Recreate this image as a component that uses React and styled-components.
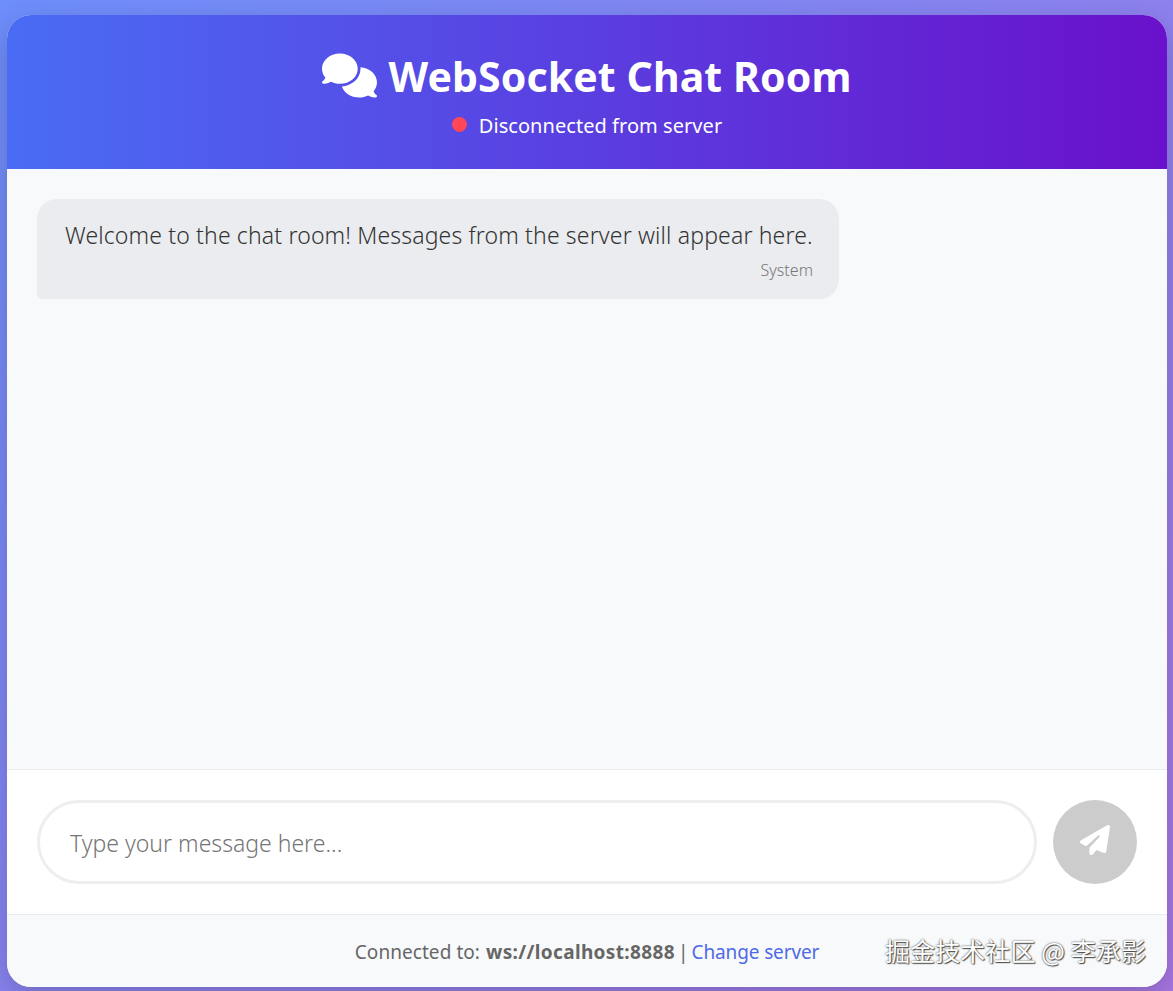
import React from "react";
import styled, { createGlobalStyle } from "styled-components";
import { FaComments, FaPaperPlane } from "react-icons/fa6";

const GlobalStyle = createGlobalStyle`
  html, body {
    margin: 0;
    padding: 0;
  }
  body {
    height: 991px;
    overflow: hidden;
    background: linear-gradient(135deg, #6e8efb, #a777e3);
    font-family: "Noto Sans", "Open Sans", sans-serif;
  }
`;

const Page = styled.div`
  height: 991px;
  box-sizing: border-box;
  padding: 15px 6px 4px 7px;
`;

const Card = styled.div`
  position: relative;
  height: 100%;
  display: flex;
  flex-direction: column;
  background: white;
  border-radius: 24px;
  overflow: hidden;
  box-shadow: 0 10px 30px rgba(0, 0, 0, 0.2);
`;

const Header = styled.header`
  height: 154px;
  flex-shrink: 0;
  display: flex;
  flex-direction: column;
  align-items: center;
  background: linear-gradient(90deg, #4a6cf5, #6a11cb);
  color: white;
`;

const Title = styled.h1`
  margin: 31px 0 0;
  display: flex;
  align-items: center;
  gap: 11px;
  height: 60px;
  font-size: 41px;
  font-weight: 700;
  letter-spacing: 0.1px;

  svg {
    position: relative;
    top: -1px;
    left: -1px;
  }
`;

const Status = styled.div`
  margin-top: 6px;
  display: flex;
  align-items: center;
  gap: 12px;
  font-size: 20px;
  letter-spacing: 0.05px;
`;

const Dot = styled.span`
  width: 15px;
  height: 15px;
  border-radius: 50%;
  background: #ff4757;
  position: relative;
  top: -1px;
`;

const Messages = styled.main`
  flex: 1;
  padding: 30px;
  background: #f8f9fa;
`;

const Bubble = styled.div`
  width: 802px;
  height: 100px;
  box-sizing: border-box;
  padding: 20px 26px 0 28px;
  background: #eaecef;
  color: #333;
  border-radius: 20px 20px 20px 5px;
`;

const BubbleText = styled.div`
  font-size: 23px;
  font-weight: 350;
  line-height: 32px;
  white-space: nowrap;
  letter-spacing: 0.15px;
`;

const Sender = styled.div`
  margin-top: 8px;
  text-align: right;
  font-size: 16px;
  font-weight: 350;
  letter-spacing: 0.05px;
  color: #777;
`;

const InputBar = styled.form`
  height: 145px;
  flex-shrink: 0;
  box-sizing: border-box;
  display: flex;
  align-items: center;
  gap: 16px;
  padding: 0 30px;
  background: white;
  border-top: 1px solid #e9ecef;
`;

const MessageInput = styled.input`
  flex: 1;
  height: 84px;
  box-sizing: border-box;
  padding: 2px 30px 0;
  border: 3px solid #eeeeee;
  border-radius: 42px;
  outline: none;
  background: white;
  font-family: inherit;
  font-size: 23px;
  font-weight: 350;
  letter-spacing: 0;

  &::placeholder {
    color: #757575;
    opacity: 1;
  }
`;

const SendButton = styled.button`
  width: 84px;
  height: 84px;
  flex-shrink: 0;
  display: flex;
  align-items: center;
  justify-content: center;
  padding: 0 0 4px;
  border: none;
  border-radius: 50%;
  background: #ccc;
  color: white;
  font-size: 30px;
`;

const Footer = styled.footer`
  height: 73px;
  flex-shrink: 0;
  box-sizing: border-box;
  display: flex;
  align-items: center;
  justify-content: center;
  padding-top: 2px;
  background: #f8f9fa;
  border-top: 1px solid #e9ecef;
  font-size: 19px;
  letter-spacing: 0.06px;
  color: #666;
  white-space: pre;

  b {
    margin-left: 1px;
    letter-spacing: 0.36px;
  }
`;

const Separator = styled.span`
  margin: 0 -2px;
`;

const Link = styled.a`
  color: #4e6ae6;
  text-decoration: none;
  letter-spacing: -0.13px;
`;

const Watermark = styled.div`
  position: absolute;
  right: 21px;
  bottom: 19px;
  font-family: "Noto Sans CJK SC", sans-serif;
  font-size: 25px;
  letter-spacing: 0.1px;
  color: white;
  text-shadow: 0 0 2px #333, 1px 1px 1px #555;
`;

export default function App() {
  return (
    <>
      <GlobalStyle />
      <Page>
        <Card>
          <Header>
            <Title>
              <FaComments size={55} />
              WebSocket Chat Room
            </Title>
            <Status>
              <Dot />
              Disconnected from server
            </Status>
          </Header>
          <Messages>
            <Bubble>
              <BubbleText>
                Welcome to the chat room! Messages from the server will appear here.
              </BubbleText>
              <Sender>System</Sender>
            </Bubble>
          </Messages>
          <InputBar>
            <MessageInput placeholder="Type your message here..." disabled />
            <SendButton type="button" disabled>
              <FaPaperPlane />
            </SendButton>
          </InputBar>
          <Footer>
            <span>
              Connected to: <b>ws://localhost:8888</b> <Separator>|</Separator> <Link href="#">Change server</Link>
            </span>
          </Footer>
          <Watermark>掘金技术社区 @ 李承影</Watermark>
        </Card>
      </Page>
    </>
  );
}
